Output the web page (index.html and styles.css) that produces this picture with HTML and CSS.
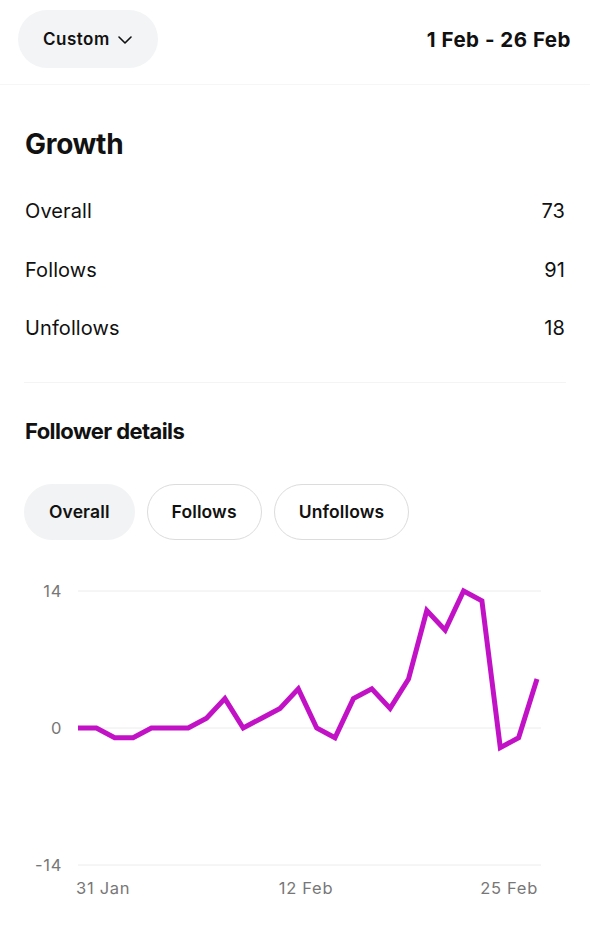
FILE: index.html
```html
<!DOCTYPE html>
<html lang="en">
<head>
<meta charset="utf-8">
<title>Follower growth</title>
<link rel="stylesheet" href="styles.css">
</head>
<body>
<header class="topbar">
  <button class="range-pill" type="button">
    <span>Custom</span>
    <svg class="chevron" width="14" height="8" viewBox="0 0 14 8" aria-hidden="true"><path d="M1 1l6 6 6-6" fill="none" stroke="#111" stroke-width="1.6" stroke-linecap="round" stroke-linejoin="round"/></svg>
  </button>
  <div class="date-range">1 Feb - 26 Feb</div>
</header>

<section class="growth">
  <h1 class="growth-title">Growth</h1>
  <div class="stat-row"><span>Overall</span><span>73</span></div>
  <div class="stat-row"><span>Follows</span><span>91</span></div>
  <div class="stat-row"><span>Unfollows</span><span>18</span></div>
</section>

<section class="details">
  <h2 class="details-title">Follower details</h2>
  <div class="chips">
    <button class="chip chip-active" type="button">Overall</button>
    <button class="chip" type="button">Follows</button>
    <button class="chip" type="button">Unfollows</button>
  </div>
  <svg class="chart" width="590" height="340" viewBox="0 0 590 340">
    <line x1="78" y1="21" x2="541" y2="21" class="grid"/>
    <line x1="78" y1="158" x2="541" y2="158" class="grid"/>
    <line x1="78" y1="295" x2="541" y2="295" class="grid"/>
    <text x="62" y="27" text-anchor="end" class="axis">14</text>
    <text x="62" y="164" text-anchor="end" class="axis">0</text>
    <text x="62" y="301" text-anchor="end" class="axis">-14</text>
    <text x="76" y="324" class="axis">31 Jan</text>
    <text x="306" y="324" text-anchor="middle" class="axis">12 Feb</text>
    <text x="538" y="324" text-anchor="end" class="axis">25 Feb</text>
    <polyline class="series" points="78,158 96.4,158 114.7,167.8 133.1,167.8 151.4,158 169.8,158 188.2,158 206.5,148.2 224.9,128.6 243.2,158 261.6,148.2 280,138.4 298.3,118.9 316.7,158 335,167.8 353.4,128.6 371.8,118.9 390.1,138.4 408.5,109.1 426.8,40.6 445.2,60.1 463.6,21 481.9,30.8 500.3,177.6 518.6,167.8 537,109.1"/>
  </svg>
</section>
</body>
</html>
```
FILE: styles.css
```css
* { box-sizing: border-box; }
html, body {
  margin: 0;
  padding: 0;
  background: #ffffff;
  color: #111111;
  font-family: Inter, "Noto Sans", "Liberation Sans", sans-serif;
}
.topbar {
  display: flex;
  justify-content: space-between;
  align-items: center;
  padding: 10px 19px 16px 18px;
  border-bottom: 1px solid #f6f6f6;
}
.range-pill {
  display: flex;
  align-items: center;
  gap: 8px;
  height: 58px;
  padding: 0 26px 0 25px;
  border: none;
  border-radius: 29px;
  background: #f3f4f6;
  font-family: inherit;
  font-size: 17px;
  font-weight: 600;
  letter-spacing: 0.5px;
  color: #111;
}
.chevron { display: block; margin-top: 1px; }
.date-range {
  font-size: 20.5px;
  font-weight: 700;
  letter-spacing: 0.5px;
}
.growth {
  margin: 0 24px;
  padding: 42px 0 24px 1px;
  border-bottom: 1px solid #f4f4f4;
}
.growth-title {
  margin: 0 0 21px;
  font-size: 28px;
  line-height: 34px;
  font-weight: 700;
  letter-spacing: -0.3px;
}
.stat-row {
  display: flex;
  justify-content: space-between;
  align-items: center;
  height: 58.5px;
  padding-right: 1px;
  font-size: 20px;
  font-weight: 400;
  letter-spacing: 0.1px;
}
.details {
  padding-top: 34px;
}
.details-title {
  margin: 0 0 39px 25px;
  font-size: 22px;
  line-height: 28px;
  font-weight: 700;
  letter-spacing: -0.6px;
}
.chips {
  display: flex;
  gap: 12px;
  padding-left: 24px;
}
.chip {
  height: 56px;
  padding: 0 24px;
  border: 1px solid #dcdcdc;
  border-radius: 28px;
  background: #ffffff;
  font-family: inherit;
  font-size: 17.5px;
  font-weight: 600;
  letter-spacing: 0.12px;
  color: #111;
}
.chip-active {
  background: #f2f3f5;
  border-color: #f2f3f5;
}
.chart {
  display: block;
  margin-top: 30px;
}
.grid {
  stroke: #ececec;
  stroke-width: 1;
}
.axis {
  font-family: Inter, "Noto Sans", "Liberation Sans", sans-serif;
  font-size: 16.5px;
  letter-spacing: 0.7px;
  fill: #777777;
}
.series {
  fill: none;
  stroke: #c212c6;
  stroke-width: 5;
  stroke-linejoin: miter;
  stroke-miterlimit: 3;
}
```
